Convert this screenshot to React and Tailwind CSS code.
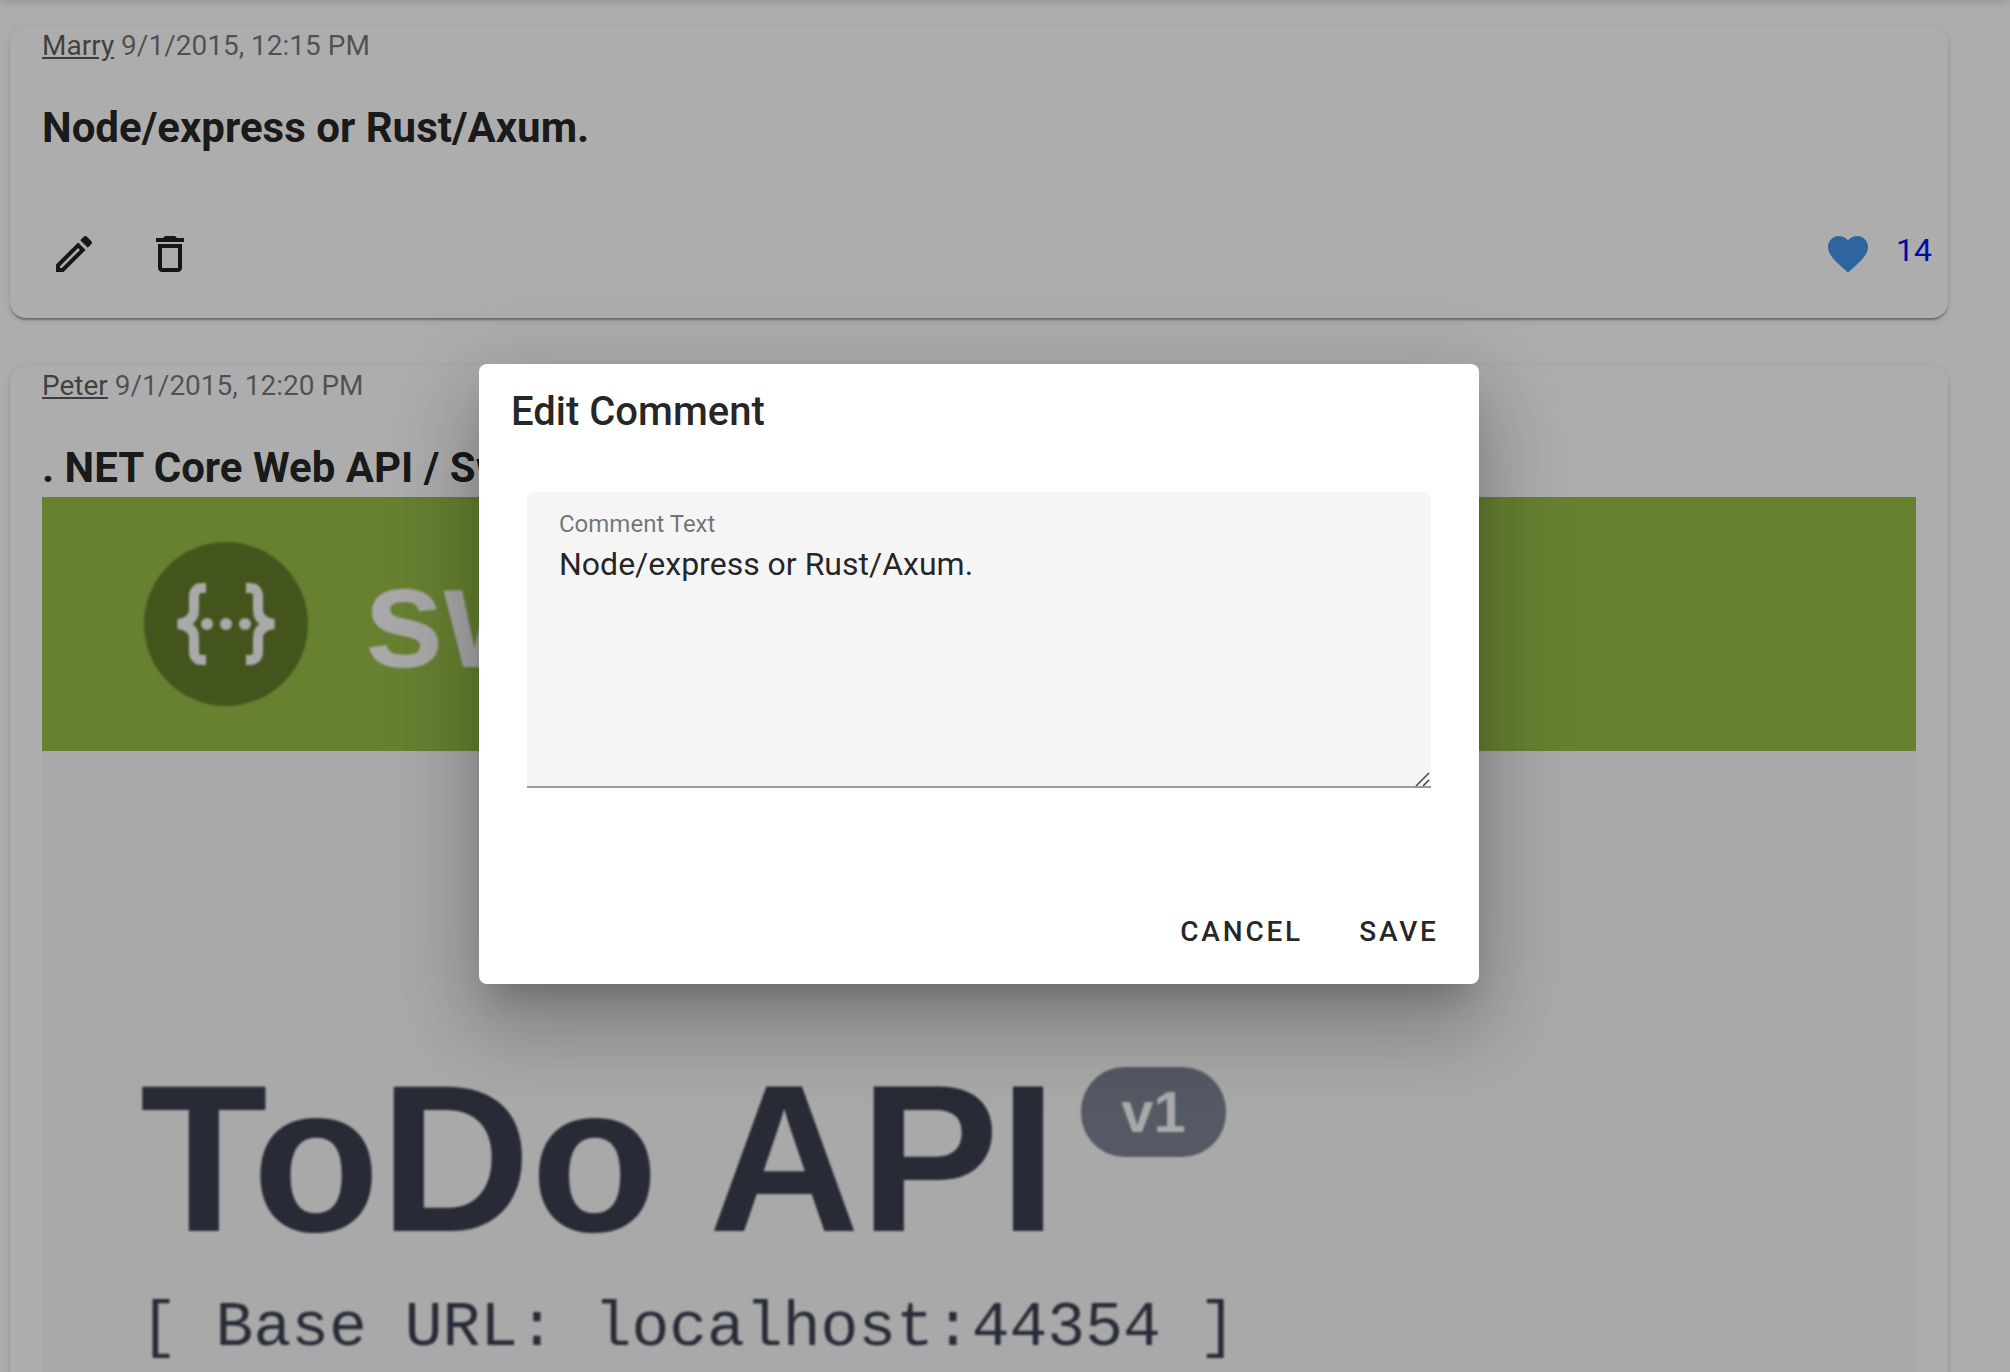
const comments = [
  { id: 1, author: "Marry", date: "9/1/2015, 12:15 PM", text: "Node/express or Rust/Axum.", likes: 14 },
  { id: 2, author: "Peter", date: "9/1/2015, 12:20 PM", text: ". NET Core Web API / Swagger", preview: true },
];

function EditIcon() {
  return (
    <svg viewBox="0 0 24 24" className="size-12" fill="currentColor" aria-hidden="true">
      <path d="M14.06 9.02l.92.92L5.92 19H5v-.92l9.06-9.06M17.66 3c-.25 0-.51.1-.7.29l-1.83 1.83 3.75 3.75 1.83-1.83c.39-.39.39-1.02 0-1.41l-2.34-2.34c-.2-.2-.45-.29-.71-.29zm-3.6 3.19L3 17.25V21h3.75L17.81 9.94l-3.75-3.75z" />
    </svg>
  );
}

function DeleteIcon() {
  return (
    <svg viewBox="0 0 24 24" className="size-12" fill="currentColor" aria-hidden="true">
      <path d="M16 9v10H8V9h8m-1.5-6h-5l-1 1H5v2h14V4h-3.5l-1-1zM18 7H6v12c0 1.1.9 2 2 2h8c1.1 0 2-.9 2-2V7z" />
    </svg>
  );
}

function HeartIcon() {
  return (
    <svg viewBox="0 0 24 24" className="size-12 text-[#4595eb]" fill="currentColor" aria-hidden="true">
      <path d="M12 21.35l-1.45-1.32C5.4 15.36 2 12.28 2 8.5 2 5.42 4.42 3 7.5 3c1.74 0 3.41.81 4.5 2.09C13.09 3.81 14.76 3 16.5 3 19.58 3 22 5.42 22 8.5c0 3.78-3.4 6.86-8.55 11.54L12 21.35z" />
    </svg>
  );
}

function SwaggerLogo() {
  return (
    <svg viewBox="0 0 164 164" className="size-41 shrink-0" aria-hidden="true">
      <circle cx="82" cy="82" r="82" fill="#637e2a" />
      <g fill="none" stroke="#fafafa" strokeWidth="10">
        <path d="M62 46h-4q-8 0-8 9v13q0 12-16 14q16 2 16 14v13q0 9 8 9h4" />
        <path d="M102 46h4q8 0 8 9v13q0 12 16 14q-16 2-16 14v13q0 9-8 9h-4" />
      </g>
      <g fill="#fafafa">
        <circle cx="63" cy="82" r="6" />
        <circle cx="82" cy="82" r="6" />
        <circle cx="101" cy="82" r="6" />
      </g>
    </svg>
  );
}

function SwaggerPreview() {
  return (
    <div className="overflow-hidden bg-[#fafafa] font-['Liberation_Sans',sans-serif]">
      <div className="flex h-[254px] items-center bg-[#98be49] px-[102px] text-[#fafafa]">
        <div className="flex items-center gap-14 blur-[1px]">
          <SwaggerLogo />
          <span className="pb-3 text-[144px] leading-none font-bold">swagger</span>
        </div>
      </div>
      <div className="px-[98px] pt-[316px] pb-24 text-[#3b4151]">
        <div className="flex items-start gap-6 blur-[1px]">
          <h3 className="text-[209px] leading-[184px] font-bold text-[#3b3f50]">ToDo API</h3>
          <span className="flex h-[90px] items-center rounded-[44px] bg-[#7d8492] px-10 text-[58px] leading-none font-bold text-[#fafafa]">
            v1
          </span>
        </div>
        <p className="mt-9 font-['Liberation_Mono',monospace] text-[63px] leading-[84px] whitespace-pre blur-[1px]">
          [ Base URL: localhost:44354 ]
        </p>
      </div>
    </div>
  );
}

function CommentCard({ comment }) {
  return (
    <article className="rounded-2xl bg-white shadow-[0_4px_2px_-2px_rgba(0,0,0,0.2),0_2px_2px_0_rgba(0,0,0,0.14),0_2px_6px_0_rgba(0,0,0,0.12)]">
      <div className="flex flex-col gap-8 px-8">
        <p className="text-[28px] leading-10 text-black/54">
          <a href="#author" className="text-black/65 underline">{comment.author}</a> {comment.date}
        </p>
        <h2 className="text-[42px] leading-[59px] font-bold">{comment.text}</h2>
      </div>
      {comment.preview && (
        <div className="px-8 pb-8">
          <SwaggerPreview />
        </div>
      )}
      {comment.likes && (
        <div className="flex items-center px-4 pt-[49px] pb-4">
          <button type="button" aria-label="Edit comment" className="grid size-24 place-items-center">
            <EditIcon />
          </button>
          <button type="button" aria-label="Delete comment" className="grid size-24 place-items-center">
            <DeleteIcon />
          </button>
          <button type="button" aria-label="Like comment" className="ml-auto grid size-24 place-items-center">
            <HeartIcon />
          </button>
          <span className="pb-2 text-[32px] leading-10 text-[#0014f0]">{comment.likes}</span>
        </div>
      )}
    </article>
  );
}

function EditDialog() {
  return (
    <div className="absolute inset-0 flex items-center justify-center bg-black/32 pr-13 pb-6">
      <section
        role="dialog"
        aria-modal="true"
        aria-labelledby="dialog-title"
        className="flex w-[1000px] flex-col rounded-lg bg-white shadow-[0_22px_30px_-14px_rgba(0,0,0,0.2),0_48px_76px_6px_rgba(0,0,0,0.14),0_18px_92px_16px_rgba(0,0,0,0.12)]"
      >
        <h1 id="dialog-title" className="px-8 pt-4 text-[40px] leading-16 font-medium">
          Edit Comment
        </h1>
        <div className="px-12 pt-12 pb-[92px]">
          <div className="relative flex flex-col rounded-t-lg border-b-2 border-[#9a9a9a] bg-[#f5f5f5] px-8 pt-4 pb-[6px]">
            <label htmlFor="comment-text" className="text-2xl leading-8 text-black/54">
              Comment Text
            </label>
            <textarea
              id="comment-text"
              rows={5}
              defaultValue="Node/express or Rust/Axum."
              className="resize-none bg-transparent text-[32px] leading-12 outline-none"
            />
            <svg viewBox="0 0 16 16" className="absolute right-0 -bottom-px size-4" fill="none" stroke="#444" strokeWidth="1.5" aria-hidden="true">
              <path d="M1 15L14 2M8 15l6-6" />
            </svg>
          </div>
        </div>
        <div className="flex justify-end gap-4 p-4 text-[28px] leading-[72px] font-medium">
          <button type="button" className="px-4 tracking-widest">CANCEL</button>
          <button type="button" className="min-w-32 px-4 tracking-widest">SAVE</button>
        </div>
      </section>
    </div>
  );
}

export default function App() {
  return (
    <div className="relative h-screen overflow-hidden bg-white font-['Roboto',sans-serif] text-black/87">
      <header className="-mt-34 mb-2 h-32 shadow-[0_4px_8px_-2px_rgba(0,0,0,0.2),0_8px_10px_0_rgba(0,0,0,0.14),0_2px_20px_0_rgba(0,0,0,0.12)]" />
      <main className="flex flex-col gap-12 pt-[26px] pr-[62px] pl-[10px]">
        {comments.map((comment) => (
          <CommentCard key={comment.id} comment={comment} />
        ))}
      </main>
      <EditDialog />
    </div>
  );
}
